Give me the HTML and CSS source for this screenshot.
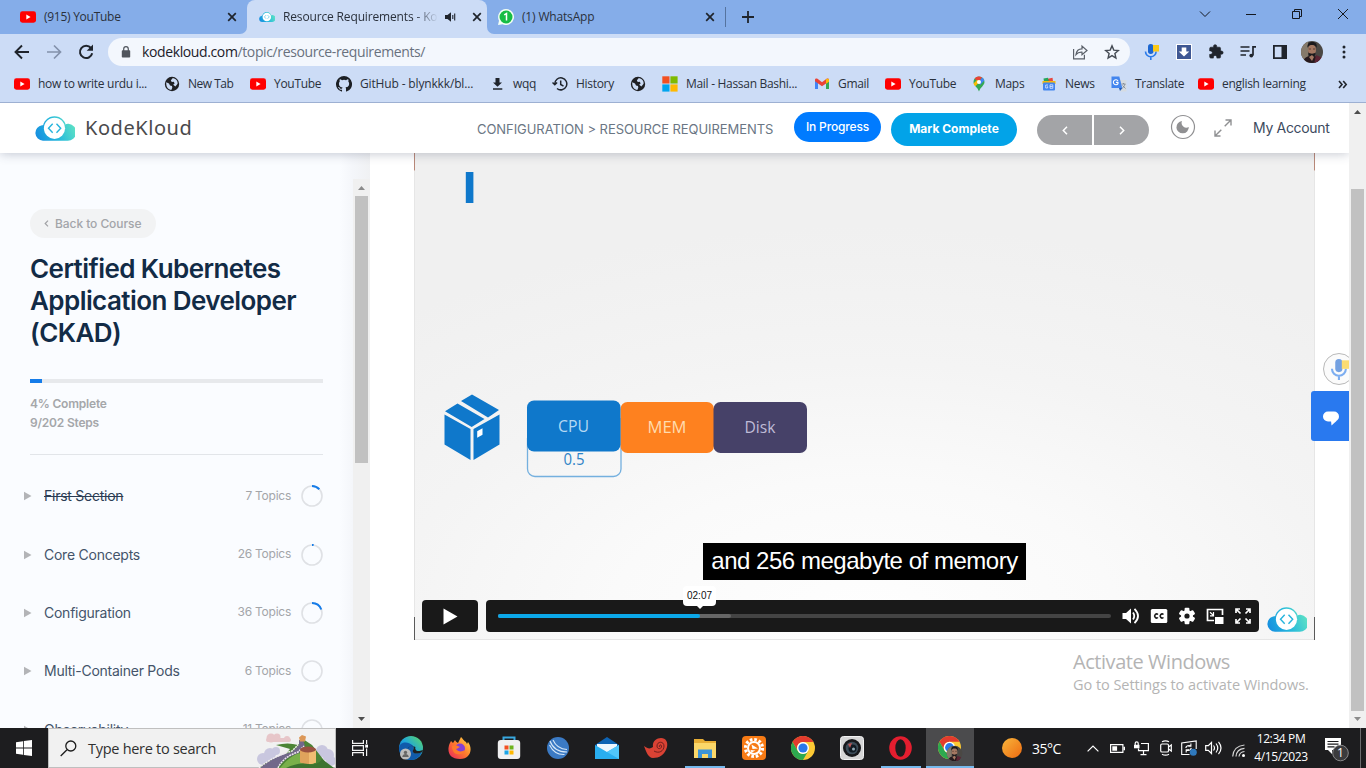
FILE: index.html
```html
<!DOCTYPE html>
<html lang="en">
<head>
<meta charset="utf-8">
<title>Resource Requirements - KodeKloud</title>
<link rel="stylesheet" href="styles.css">
</head>
<body>
<svg class="defs" width="0" height="0">
  <defs>
    <linearGradient id="cloudg" gradientUnits="userSpaceOnUse" x1="2" y1="24" x2="38" y2="8"><stop offset="0" stop-color="#168de0"/><stop offset=".5" stop-color="#25b8dc"/><stop offset="1" stop-color="#5be0c6"/></linearGradient>
    <linearGradient id="sun" x1="0" y1="0" x2="1" y2="1"><stop offset="0" stop-color="#f8b63c"/><stop offset="1" stop-color="#ee6a10"/></linearGradient>
    <linearGradient id="edgeg" x1="0" y1="1" x2="1" y2="0"><stop offset="0" stop-color="#0c59b4"/><stop offset=".5" stop-color="#1fa6dc"/><stop offset="1" stop-color="#5fdc60"/></linearGradient>
    <linearGradient id="ffg" x1="1" y1="0" x2="0" y2="1"><stop offset="0" stop-color="#ffe14a"/><stop offset=".5" stop-color="#ff7a2c"/><stop offset="1" stop-color="#e8215f"/></linearGradient>
    <radialGradient id="slidebg" cx=".5" cy=".95" r=".8"><stop offset="0" stop-color="#fefefe"/><stop offset=".35" stop-color="#fafafa"/><stop offset=".65" stop-color="#f4f4f4"/><stop offset="1" stop-color="#f0f0f0"/></radialGradient>
    <symbol id="yt" viewBox="0 0 16 16"><rect y="2.3" width="16" height="11.4" rx="2.4" fill="#f00"/><path d="M6.3 5.6v4.8L10.6 8z" fill="#fff"/></symbol>
    <symbol id="cloud" viewBox="0 0 40 25"><path d="M8 24.700a7.800 7.800 0 0 1-1-15.500L10 9h20q1.500-1.500 3.500-1.300a8.500 8.500 0 0 1-1.500 17z" fill="url(#cloudg)"/><circle cx="19.500" cy="12" r="11.700" fill="url(#cloudg)"/><circle cx="19.500" cy="12.300" r="10.600" fill="#fff"/><path d="M17.700 7.800 13.500 12.300l4.200 4.500M21.500 7.800l4.200 4.500-4.200 4.500" fill="none" stroke="#25b4dd" stroke-width="1.400"/></symbol>
    <symbol id="x" viewBox="0 0 10 10"><path d="M1.200 1.200l7.600 7.600M8.800 1.200L1.200 8.800" stroke="#1f242c" stroke-width="1.700"/></symbol>
    <symbol id="globe" viewBox="0 0 16 16"><circle cx="8" cy="8" r="7.200" fill="#1f2023"/><path d="M2.200 6.200 5 7.500l1 2 2 .5.300 1.800-1 2.200C4.500 13.500 2 11.500 2.200 6.200zM8.500 2.200 6.800 4.500l1 1.500 2-.2.800 1.700-1.400 1.200 2.200 1.800 2.200-2.800c.4-3-1.800-5.500-5.100-5.500z" fill="#ccdcf5"/></symbol>
    <symbol id="chrome" viewBox="0 0 24 24"><circle cx="12" cy="12" r="12" fill="#fcc934"/><path d="M1.600 6A12 12 0 0 1 22.400 6H12a6 6 0 0 0-5.200 9z" fill="#e33b2e"/><path d="M1.600 6A12 12 0 0 0 12 24l5.200-9A6 6 0 0 1 6.800 15z" fill="#2da94f"/><circle cx="12" cy="12" r="6" fill="#fff"/><circle cx="12" cy="12" r="4.600" fill="#2a78ea"/></symbol>
    <symbol id="face" viewBox="0 0 24 24"><clipPath id="fc"><circle cx="12" cy="12" r="11"/></clipPath><g clip-path="url(#fc)"><path d="M0 0h24v24H0z" fill="#4b4844"/><path d="M0 0h8v24H0z" fill="#857a6b"/><path d="M3 24c0-7 5-8 9-8s9 2 11 8z" fill="#25191d"/><path d="M16 15l7 3v6h-9z" fill="#5c2434"/><ellipse cx="12" cy="10" rx="4" ry="6" fill="#a47862"/><path d="M7.500 8C7 3 9.500 2 12.500 2S17.500 4 16.500 8c-1-3-3-3-4.500-3s-3.500 0-4.500 3zM8.500 12.500c1 1.500 6 1.500 7 0 0 3.500-1.500 4.500-3.500 4.500s-3.500-1-3.500-4.500z" fill="#1b1a1d"/><path d="M8.800 9h2.200M13 9h2.200" stroke="#4a3029" stroke-width=".8"/><path d="M9 17l3-2 2 2-2 4z" fill="#a47862"/></g></symbol>
    <symbol id="mic" viewBox="0 0 16 18"><rect x="4" y="1" width="5.500" height="10" rx="2.700" fill="#1b66d1"/><path d="M1.500 8.500a5.300 5.300 0 0 0 10.600 0M6.800 14v3" fill="none" stroke="#2a7bea" stroke-width="1.600"/><path d="M9 2h6v6.500H9z" fill="#fbc916"/></symbol>
    <symbol id="tri" viewBox="0 0 8 10"><path d="M0 .8 7.500 5 0 9.200z" fill="#b3b4b7"/></symbol>
  </defs>
</svg>

<div class="tabs">
  <div class="tab tab-a"><svg width="16" height="16"><use href="#yt"/></svg><span class="t">(915) YouTube</span><svg class="cl" width="10" height="10"><use href="#x"/></svg></div>
  <div class="tab-back"><div class="tab tab-b"><svg width="16" height="10"><use href="#cloud"/></svg><span class="t fade">Resource Requirements - Kod</span><svg class="spk" width="12" height="12" viewBox="0 0 12 12"><path d="M0 4h2.500L6 1.200v9.600L2.500 8H0z" fill="#1f242c"/><path d="M7.800 4v4M9.700 2.500v7" stroke="#1f242c" stroke-width="1.100"/></svg><svg class="cl" width="10" height="10"><use href="#x"/></svg></div></div>
  <div class="tab-wrap"><div class="tab tab-c"><svg width="16" height="16" viewBox="0 0 16 16"><path d="M8 0a8 8 0 1 1-3.500 15.200L0 16l1-4.300A8 8 0 0 1 8 0z" fill="#f2fff4"/><circle cx="8" cy="8" r="6.500" fill="#16bd45"/><path d="M6.200 5.900 8.500 4.600v6.800" stroke="#fff" stroke-width="1.500" fill="none"/></svg><span class="t">(1) WhatsApp</span><svg class="cl" width="10" height="10"><use href="#x"/></svg></div></div>
  <svg class="plus" width="12" height="12" viewBox="0 0 12 12"><path d="M6 0v12M0 6h12" stroke="#1f242c" stroke-width="1.800"/></svg>
  <div class="win">
    <svg width="46" height="28" viewBox="0 0 46 28" fill="none" stroke="#14181f"><path d="M18 11.500l5 5 5-5"/></svg>
    <svg width="46" height="28" viewBox="0 0 46 28" fill="none" stroke="#14181f"><path d="M18 14.500h10"/></svg>
    <svg width="46" height="28" viewBox="0 0 46 28" fill="none" stroke="#14181f"><path d="M18.500 11.500h7v7h-7zM20.500 11.500v-2h7v7h-2"/></svg>
    <svg width="46" height="28" viewBox="0 0 46 28" fill="none" stroke="#14181f"><path d="M18 9l10 10M28 9L18 19"/></svg>
  </div>
</div>

<div class="toolbar">
  <svg width="32" height="32" viewBox="0 0 32 32" fill="none" stroke="#1f242c" stroke-width="1.900"><path d="M23 16H10M16 9.500 9.500 16l6.500 6.500"/></svg>
  <svg width="32" height="32" viewBox="0 0 32 32" fill="none" stroke="#8391ab" stroke-width="1.700"><path d="M9 16h13M16 9.500l6.500 6.500-6.500 6.500"/></svg>
  <svg width="32" height="32" viewBox="0 0 32 32" fill="none" stroke="#1f242c" stroke-width="2"><path d="M21 12a6.200 6.200 0 1 0 1.200 5.300"/><path d="M23 8.500v6.300h-6.300z" fill="#1f242c" stroke="none"/></svg>
  <div class="omni">
    <svg width="10" height="12" viewBox="0 0 10 12"><rect x=".8" y="4.200" width="8.400" height="7.300" rx=".8" fill="#50555d"/><path d="M2.700 5V2.900a2.300 2.300 0 0 1 4.600 0V5" fill="none" stroke="#50555d" stroke-width="1.200"/></svg>
    <span class="url"><b>kodekloud.com</b>/topic/resource-requirements/</span>
    <svg width="32" height="20" viewBox="0 0 32 20" fill="none" stroke="#5a6069" stroke-width="1.200"><path d="M9.600 7v9.800h10.800v-4M12 12.500c.5-4 3-5.700 6-5.700V4l5 4.500-5 4.300v-2.600c-3-.2-4.500.5-6 2.300z"/></svg>
    <svg width="32" height="20" viewBox="0 0 32 20" fill="none" stroke="#454b54" stroke-width="1.400"><path d="M16 3.900l1.800 4.200 4.500.4-3.400 3 1 4.500-3.900-2.400-3.900 2.400 1-4.500-3.400-3 4.500-.4z"/></svg>
  </div>
  <svg class="tm" width="16" height="18"><use href="#mic"/></svg>
  <div class="ext">
    <svg width="32" height="32" viewBox="0 0 32 32"><path d="M8 8h16v16H8z" fill="#fff"/><path d="M9 9h14v14H9z" fill="#3e5793"/><path d="M13.700 11.500h4.600v4h3L16 20.500l-5.300-5h3z" fill="#fff"/></svg>
    <svg width="32" height="32" viewBox="0 0 24 24"><path transform="translate(6.300 6) scale(.48)" d="M20.500 11H19V7a2 2 0 0 0-2-2h-4V3.500a2.500 2.500 0 0 0-5 0V5H4a2 2 0 0 0-2 2v3.800h1.500a2.700 2.700 0 0 1 0 5.400H2V20a2 2 0 0 0 2 2h3.800v-1.500a2.700 2.700 0 0 1 5.400 0V22H17a2 2 0 0 0 2-2v-4h1.500a2.500 2.500 0 0 0 0-5z" fill="#1f242c" stroke="#1f242c"/></svg>
    <svg width="32" height="32" viewBox="0 0 32 32" fill="none" stroke="#1f242c" stroke-width="1.700"><path d="M8.500 11h9M8.500 15h9M8.500 19h5.500M24 10.900h-3v8.500"/><circle cx="19.300" cy="19.600" r="1.900" fill="#1f242c" stroke="none"/></svg>
    <svg width="32" height="32" viewBox="0 0 32 32"><path d="M9.900 9.900h12.200v12.200H9.900z" fill="none" stroke="#1f242c" stroke-width="1.800"/><path d="M17.500 9H23v14h-5.500z" fill="#1f242c"/></svg>
    <svg width="32" height="32" viewBox="0 0 32 32"><use href="#face" x="4" y="4" width="24" height="24"/></svg>
    <svg width="32" height="32" viewBox="0 0 32 32" fill="#1f242c"><circle cx="16" cy="11" r="1.500"/><circle cx="16" cy="16" r="1.500"/><circle cx="16" cy="21" r="1.500"/></svg>
  </div>
</div>

<div class="marks">
  <div class="bm"><svg><use href="#yt"/></svg><span>how to write urdu i...</span></div>
  <div class="bm"><svg><use href="#globe"/></svg><span>New Tab</span></div>
  <div class="bm"><svg><use href="#yt"/></svg><span>YouTube</span></div>
  <div class="bm"><svg viewBox="0 0 16 16"><path d="M8 0a8 8 0 0 0-2.530 15.590c.4.070.55-.17.550-.38v-1.490c-2.010.37-2.530-.49-2.690-.94-.09-.23-.48-.94-.82-1.130-.28-.15-.68-.52-.01-.53.63-.01 1.080.58 1.230.82.72 1.210 1.870.87 2.330.66.070-.52.280-.87.510-1.070-1.780-.2-3.640-.89-3.640-3.950 0-.87.310-1.590.82-2.150-.08-.2-.36-1.020.08-2.120 0 0 .67-.21 2.200.82a7.600 7.600 0 0 1 4 0c1.530-1.040 2.200-.82 2.200-.82.44 1.100.16 1.920.08 2.120.51.56.82 1.270.82 2.150 0 3.070-1.870 3.750-3.650 3.950.29.25.54.73.54 1.480v2.200c0 .21.150.46.550.38A8 8 0 0 0 8 0z" fill="#1b1f24"/></svg><span>GitHub - blynkkk/bl...</span></div>
  <div class="bm"><svg viewBox="0 0 16 16"><path d="M6.500 2h4v4.500H13l-4.500 4.300L4 6.500h2.500zM4 12.300h9.300v1.500H4z" fill="#1f242c"/></svg><span>wqq</span></div>
  <div class="bm"><svg viewBox="0 0 16 16" fill="none" stroke="#1f242c" stroke-width="1.500"><path d="M2.800 8A6 6 0 1 1 5 12.500M.5 6.500l2.300 2.300 2.300-2.300M8.700 4.500V8.500l2.800 1.700"/></svg><span>History</span></div>
  <div class="bm"><svg><use href="#globe"/></svg></div>
  <div class="bm"><svg viewBox="0 0 16 16"><path d="M.3.300h7.200v7.200H.3z" fill="#f25022"/><path d="M8.400.300h7.200v7.200H8.400z" fill="#7fba00"/><path d="M.3 8.400h7.200v7.200H.3z" fill="#00a4ef"/><path d="M8.400 8.400h7.200v7.200H8.400z" fill="#ffb900"/></svg><span>Mail - Hassan Bashi...</span></div>
  <div class="bm"><svg viewBox="0 0 16 16"><path d="M1 4v9h3V6z" fill="#4285f4"/><path d="M15 4v9h-3V6z" fill="#34a853"/><path d="M1 4.500V3.800C1 2.600 2.500 2 3.500 2.800L8 6.300l4.500-3.500c1-.8 2.500-.2 2.500 1v1.700L8 10.300 1 5.200z" fill="#ea4335"/><path d="M12 3.200c1.300-1 3-.5 3 .8v1.700l-3 2z" fill="#fbbc04"/></svg><span>Gmail</span></div>
  <div class="bm"><svg><use href="#yt"/></svg><span>YouTube</span></div>
  <div class="bm"><svg viewBox="0 0 16 16"><path d="M8 .500a5.500 5.500 0 0 1 5.500 5.500C13.500 9.500 9.500 11 8 15.500 6.500 11 2.500 9.500 2.500 6A5.500 5.500 0 0 1 8 .500z" fill="#34a853"/><path d="M3.500 2.800 8 6l3-4.600A5.500 5.500 0 0 0 3.500 2.800z" fill="#ea4335"/><path d="M8 6 11 1.400a5.500 5.500 0 0 1 2.300 3L9 9z" fill="#4285f4"/><path d="M4.300 10.300 9.500 5 6 4 2.500 7.500c.300 1.200 1 2 1.800 2.800z" fill="#fbbc04"/><circle cx="8" cy="6" r="2" fill="#fff"/></svg><span>Maps</span></div>
  <div class="bm"><svg viewBox="0 0 16 16"><path d="M3.500 3.500l8-1.800.5 4H3.500z" fill="#e8453c"/><path d="M2.500 2.500 7 1.800l1 4H3z" fill="#26a65b"/><path d="M1.500 5h13v3h-13z" fill="#f7b90f"/><rect x="2" y="6.500" width="12" height="8" rx="1" fill="#4385ee"/><path d="M7 9H4.700v3h2v-1.300H6M9 8.800h2.800v3.500H9zM9 10.500h2.600" fill="none" stroke="#dfeaff" stroke-width=".8"/></svg><span>News</span></div>
  <div class="bm"><svg viewBox="0 0 16 16"><path d="M7 4h8.500v11.500H9z" fill="#d5dbe1"/><path d="M.500.500H8.300L11.300 12H.500z" fill="#4385ee"/><path d="M8 12h3.500L9 15z" fill="#1d5bbc"/><path d="M7 5A2.500 2.500 0 1 0 7 7.600V6.400H4.900" fill="none" stroke="#fff" stroke-width="1.100"/><path d="M10.500 8h4M12.500 7v1M14 8c-.5 2-1.500 3-3 4.500M11.500 9.500l3 3" fill="none" stroke="#79838d" stroke-width=".8"/></svg><span>Translate</span></div>
  <div class="bm"><svg><use href="#yt"/></svg><span>english learning</span></div>
  <svg class="more" width="10" height="9" viewBox="0 0 10 9" fill="none" stroke="#1f242c" stroke-width="1.600"><path d="M1 1l3 3.500L1 8M5.200 1l3 3.500-3 3.500"/></svg>
</div>

<div class="view">
  <div class="page">
    <header class="head">
      <svg class="logo" width="40" height="25"><use href="#cloud"/></svg>
      <span class="brand">KodeKloud</span>
      <span class="crumb">CONFIGURATION &gt; RESOURCE REQUIREMENTS</span>
      <span class="prog">In Progress</span>
      <span class="mark">Mark Complete</span>
      <span class="nav nl"><svg width="6" height="9" viewBox="0 0 6 9"><path d="M5 .8 1.300 4.500 5 8.200" fill="none" stroke="#fff" stroke-width="1.500"/></svg></span>
      <span class="nav nr"><svg width="6" height="9" viewBox="0 0 6 9"><path d="M1 .8 4.700 4.500 1 8.200" fill="none" stroke="#fff" stroke-width="1.500"/></svg></span>
      <svg class="moon" width="26" height="26" viewBox="0 0 26 26"><circle cx="13" cy="13" r="11.500" fill="none" stroke="#909092" stroke-width="1.200"/><path d="M12 7a4.800 4.800 0 0 0 6.800 6A6.200 6.200 0 1 1 12 7z" fill="#909092"/></svg>
      <svg class="expand" width="18" height="18" viewBox="0 0 18 18" fill="none" stroke="#8f9092" stroke-width="1.400"><path d="M11.500 1H17v5.500M17 1l-6.300 6.300M1 11.500V17h5.500M1 17l6.300-6.300"/></svg>
      <span class="acct">My Account</span>
    </header>
    <div class="cols">
      <aside class="side">
        <div class="sidein">
          <div class="back"><svg width="5" height="7" viewBox="0 0 5 7"><path d="M4 .7 1.200 3.500 4 6.300" fill="none" stroke="#a0a1a4" stroke-width="1.200"/></svg><span>Back to Course</span></div>
          <h1>Certified Kubernetes<br>Application Developer<br>(CKAD)</h1>
          <div class="bar"><i></i></div>
          <div class="stat">4% Complete<br>9/202 Steps</div>
          <div class="rows">
            <div class="row"><svg width="8" height="10"><use href="#tri"/></svg><span class="nm done">First Section</span><span class="tp">7 Topics</span><svg class="ring" viewBox="0 0 22 22"><circle cx="11" cy="11" r="10"/><path d="M11 1a10 10 0 0 1 7.300 3.200"/></svg></div>
            <div class="row"><svg width="8" height="10"><use href="#tri"/></svg><span class="nm">Core Concepts</span><span class="tp">26 Topics</span><svg class="ring" viewBox="0 0 22 22"><circle cx="11" cy="11" r="10"/><path d="M11 1a10 10 0 0 1 1.600.1"/></svg></div>
            <div class="row"><svg width="8" height="10"><use href="#tri"/></svg><span class="nm">Configuration</span><span class="tp">36 Topics</span><svg class="ring" viewBox="0 0 22 22"><circle cx="11" cy="11" r="10"/><path d="M11 1a10 10 0 0 1 9.300 6.500"/></svg></div>
            <div class="row"><svg width="8" height="10"><use href="#tri"/></svg><span class="nm">Multi-Container Pods</span><span class="tp">6 Topics</span><svg class="ring" viewBox="0 0 22 22"><circle cx="11" cy="11" r="10"/></svg></div>
            <div class="row"><svg width="8" height="10"><use href="#tri"/></svg><span class="nm">Observability</span><span class="tp">11 Topics</span><svg class="ring" viewBox="0 0 22 22"><circle cx="11" cy="11" r="10"/></svg></div>
          </div>
        </div>
        <div class="sb sb-side"><svg width="7" height="4" viewBox="0 0 7 4"><path d="M0 4h7L3.500 0z" fill="#8b8b8b"/></svg><i></i><svg width="7" height="4" viewBox="0 0 7 4"><path d="M0 0h7L3.500 4z" fill="#4d4d4d"/></svg></div>
      </aside>
      <main class="main">
        <div class="video">
          <svg class="slide" width="901" height="487" viewBox="0 0 901 487">
            <path d="M0 0h901v487H0z" fill="url(#slidebg)"/>
            <path d="M.5 0v17.500M900.500 0v17.500" stroke="#b88878"/><path d="M.5 464v23M900.500 464v23" stroke="#5a5a5a"/>
            <path d="M1 486.500h899M.5 18v446M900.500 18v446" stroke="#e6e6e6"/>
            <path d="M51.800 19h7.600v31h-7.600z" fill="#0f78cb"/>
            <g fill="#0f78cb"><path d="M58 241.500l27 15.500-11 7.500-27-16.500zM43.500 250.500l27 15.500-12.800 8L31 258.300zM30.500 261.500 56.500 276v31L30.500 291.500zM85.500 261.500 59.500 276v31l26-15.500z"/><path d="M63.200 278.300l5.300-3v6.400l-5.300 3z" fill="#fff"/></g>
            <path d="M113.500 285v31a7.500 7.500 0 0 0 7.500 7.500h78.500a7.500 7.500 0 0 0 7.500-7.500V265" fill="none" stroke="#74b0df" stroke-width="1.300"/>
            <rect x="206.500" y="249" width="93.500" height="51" rx="7" fill="#fe811f"/><rect x="299.500" y="249" width="93.500" height="51" rx="7" fill="#464168"/>
            <rect x="113" y="247.500" width="93.500" height="51" rx="7" fill="#0f78cb"/>
            <g class="st" text-anchor="middle"><text x="159.500" y="279" textLength="31" lengthAdjust="spacingAndGlyphs" fill="#b5d8f3">CPU</text><text x="253" y="280" textLength="39" lengthAdjust="spacingAndGlyphs" fill="#ffdcae">MEM</text><text x="346" y="280" textLength="31" lengthAdjust="spacingAndGlyphs" fill="#bfbbd6">Disk</text><text x="160" y="312" textLength="21" lengthAdjust="spacingAndGlyphs" fill="#2e83c6">0.5</text></g>
          </svg>
          <div class="over">
            <div class="cap">and 256 megabyte of memory</div>
            <div class="ctl">
              <div class="play"><svg width="15" height="17" viewBox="0 0 15 17"><path d="M.5.500 14.500 8.500.500 16.500z" fill="#fff"/></svg></div>
              <div class="panel">
                <div class="track"><i class="buf"></i><i class="played"></i><span class="tip">02:07</span></div>
                <svg width="18" height="18" viewBox="0 0 18 18"><path d="M.5 6h3.500L9 1.500v15L4 12H.5z" fill="#fff"/><path d="M11 5.500q2.500 3.500 0 7M12.500 1.800q7 7.200 0 14.400" fill="none" stroke="#fff" stroke-width="1.800"/></svg>
                <svg width="18" height="18" viewBox="0 0 18 18"><rect x=".8" y="2" width="16.500" height="14" rx="1.500" fill="#fff"/><path d="M8 7.500a2 2 0 1 0 0 3M13.500 7.500a2 2 0 1 0 0 3" fill="none" stroke="#1a1a1a" stroke-width="1.500"/></svg>
                <svg width="18" height="18" viewBox="0 0 18 18"><g fill="#fff"><rect x="6.600" y=".8" width="4.800" height="16.400" rx="1"/><rect x="6.600" y=".8" width="4.800" height="16.400" rx="1" transform="rotate(60 9 9)"/><rect x="6.600" y=".8" width="4.800" height="16.400" rx="1" transform="rotate(120 9 9)"/><circle cx="9" cy="9" r="6"/></g><circle cx="9" cy="9" r="2.600" fill="#1a1a1a"/></svg>
                <svg width="18" height="18" viewBox="0 0 18 18" fill="none" stroke="#fff" stroke-width="1.700"><path d="M8 13.500H1.500v-11h15V8"/><path d="M9 10h8.500v7H9z" fill="#fff" stroke="none"/><path d="M4 5.300l3.300 3M7.500 5v3.800H4" stroke-width="1.200"/></svg>
                <svg width="18" height="18" viewBox="0 0 18 18" fill="none" stroke="#fff" stroke-width="1.700"><path d="M2 6V2h4M2 2l4.500 4.500M12 2h4v4M16 2l-4.500 4.500M2 12v4h4M2 16l4.500-4.500M12 16h4v-4M16 16l-4.500-4.500"/></svg>
              </div>
              <svg class="wm" width="40" height="25"><use href="#cloud"/></svg>
            </div>
          </div>
        </div>
        <div class="act"><div class="a1">Activate Windows</div><div class="a2">Go to Settings to activate Windows.</div></div>
        <div class="float">
          <div class="fm"><svg width="21" height="25"><use href="#mic"/></svg></div>
          <div class="fc"><svg width="16" height="15" viewBox="0 0 16 15"><rect y=".5" width="16" height="10" rx="5" fill="#fff"/><path d="M8 9.500h6L8.500 14.500z" fill="#fff"/></svg></div>
        </div>
      </main>
    </div>
  </div>
  <div class="sb sb-page"><svg width="7" height="4" viewBox="0 0 7 4"><path d="M0 4h7L3.500 0z" fill="#4d4d4d"/></svg><i></i><svg width="7" height="4" viewBox="0 0 7 4"><path d="M0 0h7L3.500 4z" fill="#8b8b8b"/></svg></div>
</div>

<footer class="task">
  <div class="start"><svg width="16" height="16" viewBox="0 0 16 16" fill="#fff"><path d="M0 2.200 7 1.200v6.400H0zM7.800 1.100 16 0v7.600H7.800zM0 8.400h7v6.400l-7-1zM7.800 8.400H16V16l-8.200-1.100z"/></svg></div>
  <div class="search">
    <svg width="17" height="17" viewBox="0 0 17 17" fill="none" stroke="#1c1c1c" stroke-width="1.300"><circle cx="10.800" cy="6" r="5"/><path d="M7 9.700.7 16"/></svg>
    <span>Type here to search</span>
    <svg class="wall" width="79" height="35" viewBox="0 0 79 35"><g fill="#e7c6c9"><circle cx="15" cy="5" r="4.500"/><circle cx="21" cy="4" r="3.500"/><circle cx="31" cy="6" r="3"/><rect x="10" y="5" width="25" height="4" rx="2"/></g><g fill="#c9c7df"><circle cx="7" cy="26" r="6"/><circle cx="14" cy="21" r="6"/><circle cx="20" cy="18" r="4"/><circle cx="66" cy="18" r="6"/><circle cx="72" cy="22" r="6"/><circle cx="75" cy="28" r="5"/></g><path d="M3 35q10-9 26-13l5-6-14-4q12-3 22 0l5-6 9 6 18 23z" fill="#4c8435"/><path d="M24 35q8-10 18-15l8 2-5 13z" fill="#79b04a"/><path d="M4 35q12-11 32-16l7-7 0-5h4l2 6-6 7q-14 4-22 15z" fill="#72688a"/><path d="M3 35q14-12 33-17l6-6M22 35q5-11 20-16l6-6" fill="none" stroke="#efe9ee" stroke-width="1.500" stroke-dasharray="2 .8"/><path d="M43 4.500 46 2l4 1.500-1 5h-5z" fill="#dc9858"/><path d="M44 16.500h16v13q-8 3-16 0z" fill="#dfa35c"/><path d="M53 17h7v12.500q-4 2-7 1.700z" fill="#f0bd72"/><ellipse cx="52" cy="16.500" rx="8" ry="3" fill="#9a5140"/><path d="M30 35q12-6 22-4t14-5l12 9z" fill="#3d742f"/></svg>
  </div>
  <div class="apps">
    <div class="app a0"><svg width="18" height="16" viewBox="0 0 18 16" fill="none" stroke="#f3f3f3" stroke-width="1.200"><path d="M1.600 0v3.400h10.800V0M1.600 16v-3.400h10.800V16M1.600 5.600h10.800v4.800H1.600zM15.600 0v4M15.600 8.500V16"/><path d="M14.200 4.600h2.800v3h-2.800z" fill="#fff" stroke="none"/></svg></div>
    <div class="app"><svg width="24" height="24" viewBox="0 0 24 24"><circle cx="12" cy="12" r="12" fill="url(#edgeg)"/><path d="M0 12C1 5 10 5 14 10c2 3-1 4 0 6 2 3 7 1 9 0-3 7-9 8-11 8A12 12 0 0 1 0 12z" fill="#105bab"/><path d="M9 13c1-3 4-4 5-3 2 3-1 4 0 6 1 2 5 2 9 0 1-1 1-2 .5-2-6 3-8-1-7-3-4-2-7-1-7.500 2z" fill="#1f2022"/><circle cx="6.500" cy="18" r="5.500" fill="#bcbcbc"/><circle cx="6.500" cy="16.400" r="1.700" fill="#666"/><path d="M3.300 21c0-4 6.400-4 6.400 0z" fill="#666"/></svg></div>
    <div class="app"><svg width="23" height="24" viewBox="0 0 23 24"><path d="M3 5l2 2 2-3c1 2 2 2 3 3l3-6c3 3 3 4 5 5l1 2 1-2c5 6 3 17-8 17C3 23 0 18 .5 12 1 8 2 7 3 5z" fill="url(#ffg)"/><circle cx="12" cy="12.500" r="5" fill="#843fd4"/><path d="M4 10c4-2 6 0 8 1-2 1-3 2-4 2 2 3 6 3 9 1-1 4-5 5-8 4-3 0-5-4-5-8z" fill="#ff7a2b"/></svg></div>
    <div class="app"><svg width="24" height="24" viewBox="0 0 24 24"><path d="M6.500 5V1.500h11V5" fill="none" stroke="#38a8df" stroke-width="2"/><rect x=".8" y="4" width="22.400" height="19" rx="3" fill="#f0f0f1"/><path d="M7.500 9.500h4v4h-4z" fill="#f25022"/><path d="M12.500 9.500h4v4h-4z" fill="#6db31c"/><path d="M7.500 14.500h4v4h-4z" fill="#1aa5e8"/><path d="M12.500 14.500h4v4h-4z" fill="#ffb900"/></svg></div>
    <div class="app"><svg width="22" height="22" viewBox="0 0 22 22"><circle cx="11" cy="11" r="11" fill="#3b7ac4"/><path d="M3 4q4 11 17 11M6 3q4 9 14 9.500M2.500 8q5 10 15 9.500" fill="none" stroke="#d7e8f8" stroke-width="1.100"/></svg></div>
    <div class="app"><svg width="24" height="22" viewBox="0 0 24 22"><path d="M0 8 12 0l12 8v14H0z" fill="#0e64b4"/><path d="M2 7h20v8H2z" fill="#eef7fe"/><path d="M0 8l12 7L24 8v14H0z" fill="#29aef0"/><path d="M12 15 24 8v14z" fill="#51c6fa"/></svg></div>
    <div class="app"><svg width="24" height="20" viewBox="0 0 24 20"><path d="M0 8c4 3 6 3 9 1-1-6 4-9 8-9 5 0 7 4 6 9-2 8-8 11-14 11C4 20 2 13 0 8z" fill="#d94234"/><path d="M10 13c5 3 10 0 10-5 0-5-7-5-7 0 0 4 5 3 4.500 0-.5-2-2.500-1-2 1" fill="none" stroke="#6e1f1c" stroke-width="1"/></svg></div>
    <div class="app on"><svg width="22" height="19" viewBox="0 0 22 19"><path d="M0 0h9l2 2h11v17H0z" fill="#e8ae35"/><path d="M0 4h22v15H0z" fill="#fbd769"/><path d="M4 19v-8.500h14V19h-4v-4H8v4z" fill="#3d94d8"/></svg></div>
    <div class="app"><svg width="24" height="24" viewBox="0 0 24 24"><rect width="24" height="24" rx="4" fill="#f77b15"/><circle cx="12" cy="12" r="8.500" fill="none" stroke="#fff" stroke-width="3.200" stroke-dasharray="2.600 1.850"/><circle cx="12" cy="12" r="7" fill="#fff"/><circle cx="12" cy="12" r="5" fill="#f77b15"/><path d="M9.500 8.500 16 12.500 10.500 13z" fill="#fff"/><path d="M8.500 14l5 .5-4 2z" fill="#fff"/></svg></div>
    <div class="app"><svg width="24" height="24"><use href="#chrome"/></svg></div>
    <div class="app"><svg width="24" height="24" viewBox="0 0 24 24"><rect x=".5" y=".5" width="23" height="23" rx="3" fill="#d6d6d6" stroke="#f2f2f2"/><circle cx="12" cy="12" r="9" fill="#17181b"/><circle cx="12" cy="12" r="6.300" fill="#3c4c58"/><circle cx="12.500" cy="12.500" r="4" fill="#111b23"/><path d="M8 8l4-1-2 5z" fill="#bc5756"/><circle cx="13.500" cy="13" r="1.500" fill="#91a9b7"/></svg></div>
    <div class="app on"><svg width="23" height="24" viewBox="0 0 23 24"><ellipse cx="11.500" cy="12" rx="11.300" ry="11.700" fill="#e41e2f"/><ellipse cx="11.500" cy="12" rx="5.200" ry="8.700" fill="#1d1d1f"/></svg></div>
    <div class="app on act-app"><svg width="26" height="26" viewBox="0 0 26 26"><use href="#chrome" x="1" y="1" width="23" height="23"/><use href="#face" x="9" y="10" width="17" height="17"/></svg></div>
  </div>
  <div class="tray">
    <svg class="sun" width="20" height="20"><circle cx="10" cy="10" r="10" fill="url(#sun)"/></svg>
    <span class="deg">35°C</span>
    <svg class="chev" width="12" height="7" viewBox="0 0 12 7" fill="none" stroke="#fff" stroke-width="1.200"><path d="M.6 6.400 6 1l5.400 5.400"/></svg>
    <svg class="bat" width="15" height="9" viewBox="0 0 15 9"><path d="M.6.600h12.300v7.800H.6z" fill="none" stroke="#fff" stroke-width="1.200"/><path d="M2.300 2.300h4.800v4.400H2.300zM13.500 2.700H15v3.600h-1.500z" fill="#fff"/></svg>
    <svg class="mon" width="15" height="15" viewBox="0 0 15 15" fill="none" stroke="#fff" stroke-width="1.200"><path d="M7 2.500h7.400v7.200H4.500V7.500M9.500 10v3.500M6.500 13.600h6"/><path d="M0 3.800h5.500v3.500H0z" fill="#fff" stroke="none"/><path d="M1.200 4V2.300a1.500 1.500 0 0 1 3 0V4"/></svg>
    <svg class="cam" width="12" height="16" viewBox="0 0 12 16" fill="none" stroke="#fff" stroke-width="1.200"><rect x=".7" y="4" width="7.800" height="8" rx="1.300"/><path d="M8.500 7 11.300 5v6L8.500 9M2 1.800q3.500-2 7 0M2 14.200q3.500 2 7 0"/></svg>
    <svg class="upd" width="16" height="16" viewBox="0 0 16 16" fill="none" stroke="#fff" stroke-width="1.100"><path d="M8.500 14.500H.700V3L15.200 1v8M4.800 8Q5.500 5 9.500 5.700M9.900 3.500v2.700H7.300M10.300 7.800Q9.500 11 5.700 10.300M5.200 12.500V9.900H8"/><circle cx="12.300" cy="12.300" r="3.500" fill="#2f79bd" stroke="none"/></svg>
    <svg class="vol" width="17" height="14" viewBox="0 0 17 14" fill="none" stroke="#fff" stroke-width="1.200"><path d="M.7 4.700h2.600L6.500 1.500v11L3.300 9.300H.7zM8.500 4.500q2 2.500 0 5M11 2.500q3.500 4.500 0 9M13.500.800q5 6.200 0 12.400"/></svg>
    <svg class="wifi" width="13" height="13" viewBox="0 0 13 13" fill="none" stroke="#d5d5d5" stroke-width="1.200"><path d="M.7 12.500Q1.500 2 12.500 1M4 12.500Q4.500 5 12.500 4.300M7 12.500q.500-4.500 5.500-5"/><circle cx="11.500" cy="11.500" r="1.500" fill="#fff" stroke="none"/></svg>
    <div class="clock"><span>12:34 PM</span><span>4/15/2023</span></div>
    <div class="note"><svg width="25" height="25" viewBox="0 0 25 25"><path d="M0 1h16v12H7v4l-4-4H0z" fill="#fff"/><path d="M2.500 4.500h11M2.500 7.200h11M2.500 9.900h7" stroke="#1d1d1f" stroke-width="1.200"/><circle cx="15.500" cy="16" r="7.800" fill="#3b3b3d" stroke="#88888a"/></svg><em>1</em></div>
  </div>
</footer>
</body>
</html>
```
FILE: styles.css
```css
* { box-sizing: border-box; }
body { margin: 0; width: 1366px; height: 768px; overflow: hidden; display: flex; flex-direction: column; background: #fff; font-family: "Open Sans", "Noto Sans", sans-serif; font-size: 12px; color: #2a313c; }
svg { flex: none; display: block; }
.defs { position: absolute; }
span { white-space: nowrap; }

.tabs { height: 34px; flex: none; background: #ccdcf6; display: flex; align-items: stretch; }
.tab, .tab-wrap { height: 34px; display: flex; align-items: center; }
.tab { padding-right: 10px; }
.tab .t { margin-left: 8px; padding-bottom: 1px; letter-spacing: -.27px; flex: 1; }
.tab-a { width: 247px; padding-left: 20px; background: #85ade9; border-bottom-right-radius: 7px; }
.tab-back { background: linear-gradient(#85ade9 12px, #ccdcf6 12px); }
.tab-b { width: 240px; padding-left: 12px; padding-right: 11px; background: #ccdcf6; border-radius: 8px 8px 0 0; }
.tab-b .fade { flex: none; width: 156px; letter-spacing: -.15px; -webkit-mask-image: linear-gradient(90deg, #000 132px, transparent 155px); mask-image: linear-gradient(90deg, #000 132px, transparent 155px); }
.spk { margin: 0 15px 0 6px; }
.tab-wrap { background: #85ade9; border-bottom-left-radius: 7px; }
.tab-c { width: 239px; padding-left: 11px; border-right: 1px solid #55739f; height: 20px; }
.tab-c .t { letter-spacing: -.17px; }
.plus { width: 28px; height: 34px; padding: 11px 0 11px 16px; background: #85ade9; }
.win { flex: 1; display: flex; justify-content: flex-end; height: 34px; background: #85ade9; }

.toolbar { height: 36px; flex: none; background: #ccdcf6; display: flex; align-items: center; padding-left: 6px; }
.omni { width: 1022px; height: 28px; margin-left: 6px; border-radius: 14px; background: #f3f7fd; display: flex; align-items: center; padding: 0 2px 0 13px; }
.url { flex: 1; margin-left: 11px; padding-bottom: 1px; font-size: 14px; letter-spacing: -.38px; color: #69717e; }
.url b { font-weight: 400; color: #1b2029; }
.tm { margin-left: 14px; }
.ext { display: flex; margin-left: 8px; }

.marks { height: 33px; flex: none; background: #ccdcf6; border-bottom: 1px solid #9db0d2; display: flex; align-items: center; padding: 0 0 4px 14px; }
.bm { display: flex; align-items: center; gap: 8px; flex: none; letter-spacing: -.3px; }
.bm span { padding-bottom: 1px; }
.bm svg { width: 16px; height: 16px; }
.bm:nth-child(1) { width: 150px; }
.bm:nth-child(2), .bm:nth-child(3) { width: 86px; }
.bm:nth-child(2) { letter-spacing: -.5px; }
.bm:nth-child(4) { width: 153px; letter-spacing: -.15px; }
.bm:nth-child(5) { width: 63px; }
.bm:nth-child(6) { width: 78px; }
.bm:nth-child(7) { width: 32px; }
.bm:nth-child(8) { width: 152px; }
.bm:nth-child(9) { width: 71px; }
.bm:nth-child(10) { width: 86px; }
.bm:nth-child(11), .bm:nth-child(12) { width: 70px; }
.bm:nth-child(13) { width: 87px; }
.bm:nth-child(14) { width: 140px; }

.view { height: 625px; flex: none; display: flex; }
.page { width: 1349px; display: flex; flex-direction: column; }
.head { height: 50px; flex: none; position: relative; z-index: 2; background: #fff; box-shadow: 0 1px 10px rgba(50, 60, 90, .28); display: flex; align-items: center; font-family: Inter, sans-serif; clip-path: inset(0 0 -20px 0); }
.logo { margin-left: 35px; }
.brand { font: 400 20px/26px "Noto Sans", sans-serif; color: #4a4a4c; width: 107px; margin-left: 10px; letter-spacing: .55px; }
.crumb { width: 297px; margin: 2px 0 0 285px; font-size: 13px; letter-spacing: -.06px; color: #6a7684; }
.prog, .mark { display: flex; align-items: center; justify-content: center; color: #fff; border-radius: 18px; }
.prog { width: 87px; height: 30px; background: #007bff; margin: -2px 0 0 20px; padding-bottom: 1px; font-weight: 500; letter-spacing: -.15px; }
.mark { width: 126px; height: 33px; background: #02a3e8; margin: 3px 0 0 10px; font-weight: 700; padding-bottom: 2px; }
.nav { height: 30px; width: 55px; background: #a3a4a7; display: flex; align-items: center; justify-content: center; margin-top: 4px; }
.nl { margin-left: 20px; border-radius: 15px 0 0 15px; }
.nr { margin-left: 2px; border-radius: 0 15px 15px 0; }
.moon { margin: -2px 0 0 21px; }
.expand { margin: -1px 0 0 18px; }
.acct { margin-left: 21px; padding-bottom: 1px; font-size: 14px; letter-spacing: -.32px; color: #3c4a5e; }

.cols { height: 575px; display: flex; }
.side { width: 370px; background: linear-gradient(90deg, #fafcff 340px, #f4f6fa 353px, #f0f1f3); display: flex; justify-content: space-between; overflow: hidden; font-family: Inter, sans-serif; }
.sidein { width: 323px; padding: 56px 0 0 30px; }
.back { width: 126px; height: 29px; border-radius: 15px; background: #f2f3f4; display: flex; align-items: center; padding: 0 0 1px 14px; gap: 6px; font-weight: 500; letter-spacing: -.07px; color: #a3a5a9; }
h1 { margin: 15px 0 0; font-size: 26px; line-height: 32px; font-weight: 600; letter-spacing: -.57px; color: #122b46; white-space: nowrap; }
.bar { height: 4px; margin-top: 30px; background: #e7e9ec; }
.bar i { display: block; width: 12px; height: 4px; background: #157ce9; }
.stat { margin-top: 11px; padding-bottom: 22px; line-height: 19px; font-weight: 600; letter-spacing: -.2px; color: #a5a7aa; border-bottom: 1px solid #e2e5e9; }
.rows { margin: 12px 0 0 -6px; }
.row { height: 58.400px; display: flex; align-items: center; }
.nm { flex: 1; margin-left: 12px; padding-bottom: 1px; font-size: 14px; letter-spacing: -.25px; color: #44546a; }
.nm.done { text-decoration: line-through; color: #2c3d54; }
.tp { margin-right: 10px; margin-top: -2px; letter-spacing: -.25px; color: #a3a5a9; }
.ring { width: 22px; height: 22px; fill: none; stroke: #dfe1e5; stroke-width: 1.600; }
.ring path { stroke: #157ce9; stroke-width: 2; }

.sb { width: 17px; background: #f0f0f0; display: flex; flex-direction: column; align-items: center; }
.sb i { width: 13px; background: #c1c1c1; }
.sb-side { margin-top: 26px; padding: 7px 0 7px; }
.sb-side i { height: 267px; margin-top: 6px; margin-bottom: auto; }
.sb-page { padding: 7px 0; }
.sb-page i { height: 522px; margin-top: 75px; margin-bottom: auto; }

.main { width: 979px; padding-left: 44px; position: relative; }
.video { width: 901px; height: 487px; position: relative; }
.st { font: 17px "Open Sans", "Noto Sans", sans-serif; }
.over { position: absolute; inset: 0; display: flex; flex-direction: column; align-items: center; padding-top: 390px; }
.cap { width: 323px; height: 37px; background: #000; color: #fff; font: 24px/36px "Liberation Sans", Arial, sans-serif; text-align: center; letter-spacing: -.48px; white-space: nowrap; }
.ctl { display: flex; width: 100%; margin-top: 20px; padding-left: 8px; }
.play { width: 56px; height: 32px; border-radius: 4px; background: #191919; display: flex; align-items: center; justify-content: center; }
.panel { width: 773px; height: 32px; margin-left: 8px; border-radius: 4px; background: #191919; display: flex; align-items: center; gap: 10px; padding-left: 12px; }
.track { width: 613px; height: 4px; border-radius: 2px; background: #444; position: relative; margin-right: 1px; }
.track i { position: absolute; left: 0; top: 0; height: 4px; border-radius: 2px; }
.buf { width: 233px; background: #666; }
.track .played { width: 202px; background: #0ba7e8; }
.tip { position: absolute; left: 185px; top: -28px; width: 33px; height: 20px; border-radius: 4px; background: #fff; color: #111; font: 10px/19px "Liberation Sans", Arial, sans-serif; text-align: center; }
.tip::after { content: ""; position: absolute; left: 13px; top: 19px; border: 4px solid transparent; border-top-color: #fff; border-bottom: 0; }
.wm { margin: 7px 0 0 8px; }
.act { margin: 9px 0 0 659px; color: #b4b4b4; white-space: nowrap; }
.a1 { font-size: 20px; line-height: 25px; letter-spacing: -.45px; }
.a2 { font-size: 14.500px; line-height: 21px; letter-spacing: -.05px; }
.float { position: absolute; right: 0; top: 200px; width: 38px; height: 90px; overflow: hidden; }
.fm { width: 32px; height: 32px; margin-left: 12px; padding-left: 3px; border: 1px solid #b9b9b9; border-radius: 50%; background: #fbfbfb; display: flex; justify-content: center; align-items: center; }
.fm svg { opacity: .6; }
.fc { margin-top: 6px; height: 50px; border-radius: 3px 0 0 3px; background: #2979ef; display: flex; align-items: center; justify-content: center; padding: 5px 0 0 2px; }

.task { height: 40px; flex: none; background: #1d1d1f; display: flex; color: #fff; }
.start { width: 48px; display: flex; align-items: center; justify-content: center; }
.search { width: 288px; background: #f1f1f1; border: 1px solid #bfbfbf; display: flex; align-items: center; padding-left: 11px; color: #303030; font-size: 14.500px; }
.search span { flex: 1; margin-left: 11px; letter-spacing: -.28px; }
.wall { margin-top: 4px; }
.apps { display: flex; }
.app { width: 49px; height: 40px; display: flex; align-items: center; justify-content: center; position: relative; }
.a0 { width: 50px; padding-right: 2px; }
.on::after { content: ""; position: absolute; left: 5px; right: 4px; bottom: 0; height: 2px; background: #76b9ed; }
.act-app { background: linear-gradient(90deg, transparent 1px, #4b4b4d 1px); }
.act-app::after { left: 1px; right: 0; }
.tray { flex: 1; display: flex; align-items: center; }
.sun { margin-left: 28px; }
.deg { width: 32px; margin: 0 0 0 10px; font-size: 14px; letter-spacing: -.5px; }
.chev { margin-left: 23px; }
.bat { margin-left: 11px; }
.mon { margin-left: 9px; }
.cam { margin-left: 11px; }
.upd { margin-left: 9px; }
.vol { margin-left: 8px; }
.wifi { margin: 4px 0 0 10px; }
.clock { width: 54px; margin-left: 9px; display: flex; flex-direction: column; align-items: center; line-height: 18px; letter-spacing: -.38px; }
.note { position: relative; margin: 3px 0 0 17px; }
.note em { position: absolute; left: 12px; top: 8px; font-style: normal; line-height: 16px; }
.tray::after { content: ""; width: 1px; height: 40px; margin-left: 10px; background: #6b6b6d; }
```
